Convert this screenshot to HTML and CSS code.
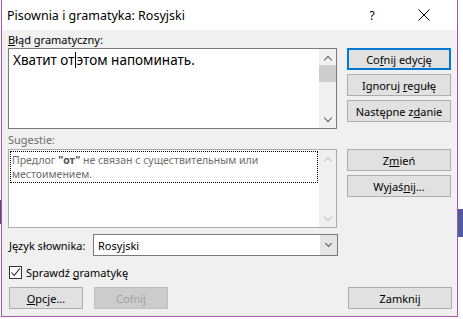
FILE: index.html
```html
<!DOCTYPE html>
<html lang="pl">

<head>
    <meta charset="UTF-8">
    <title>Pisownia i gramatyka: Rosyjski</title>
    <link rel="stylesheet" href="styles.css">
</head>

<body>
    <div class="dialog">
        <div class="titlebar">
            <span class="title">Pisownia i gramatyka: Rosyjski</span>
            <span class="help">?</span>
            <span class="close">
                <svg width="12" height="12" viewBox="0 0 12 12">
                    <path d="M0.5 0.5 L11.5 11.5 M11.5 0.5 L0.5 11.5" stroke="#000" stroke-width="1" fill="none" />
                </svg>
            </span>
        </div>

        <div class="content">
            <label class="label"><u>B</u>łąd gramatyczny:</label>
            <div class="row">
                <div class="textbox">
                    <div class="text">Хватит от<span class="caret"></span>этом напоминать.</div>
                    <div class="scrollbar">
                        <span class="arrow up"></span>
                        <span class="thumb"></span>
                        <span class="arrow down"></span>
                    </div>
                </div>
                <div class="buttons">
                    <button class="btn default">Co<u>f</u>nij edycję</button>
                    <button class="btn">Ignoruj <u>r</u>egułę</button>
                    <button class="btn">Następne z<u>d</u>anie</button>
                </div>
            </div>

            <label class="label disabled">Sugestie:</label>
            <div class="row">
                <div class="textbox suggest">
                    <div class="text">
                        <div class="focus-rect">Предлог <b>"от"</b> не связан с существительным или местоимением.</div>
                    </div>
                    <div class="scrollbar">
                        <span class="arrow up"></span>
                        <span class="arrow down"></span>
                    </div>
                </div>
                <div class="buttons">
                    <button class="btn">Z<u>m</u>ień</button>
                    <button class="btn">Wyjaś<u>n</u>ij...</button>
                </div>
            </div>

            <div class="lang-row">
                <label class="lang-label"><u>J</u>ęzyk słownika:</label>
                <div class="combo">
                    <span class="combo-value">Rosyjski</span>
                    <span class="combo-btn"><span class="arrow down"></span></span>
                </div>
            </div>

            <div class="check-row">
                <span class="checkbox">
                    <svg width="11" height="11" viewBox="0 0 11 11">
                        <path d="M1.5 5.5 L4.2 8.5 L9.8 1.5" stroke="#222" stroke-width="1.1" fill="none" />
                    </svg>
                </span>
                <span>Sprawdź <u>g</u>ramatykę</span>
            </div>

            <div class="bottom-row">
                <button class="btn small"><u>O</u>pcje...</button>
                <button class="btn small" disabled>Cofnij</button>
                <button class="btn wide">Zamknij</button>
            </div>
        </div>
    </div>
</body>

</html>
```

FILE: styles.css
```css
* {
    margin: 0;
    padding: 0;
    box-sizing: border-box;
}

body {
    width: 463px;
    height: 319px;
    overflow: hidden;
    font-family: 'Noto Sans', sans-serif;
    font-size: 11px;
    color: #000;
    background:
        linear-gradient(#55579e, #4a5ea6) no-repeat right 0 top 209px / 5px 28px,
        linear-gradient(#6a3f80, #6a3f80) no-repeat left 0 top 200px / 1px 24px,
        #fff;
}

u {
    text-decoration: underline;
    text-underline-offset: 1px;
}

.dialog {
    margin-left: 1px;
    width: 457px;
    height: 317px;
    border: 1px solid #a55aa8;
    border-top: none;
    background-color: #f0f0f0;
    display: flex;
    flex-direction: column;
}

.titlebar {
    height: 30px;
    background-color: #fff;
    display: flex;
    align-items: center;
    padding-left: 5px;
}

.title {
    font-size: 12.5px;
    flex: 1;
}

.help {
    font-size: 12px;
    width: 46px;
    text-align: center;
    margin-right: 6px;
}

.close {
    width: 46px;
    height: 30px;
    display: flex;
    align-items: center;
    justify-content: center;
    margin-right: 10px;
}

.content {
    padding: 3px 5px 0 6px;
    display: flex;
    flex-direction: column;
}

.label {
    height: 15px;
    line-height: 14px;
}

.label.disabled {
    color: #6d6d6d;
    margin-top: 4px;
    height: 16px;
}

.row {
    display: flex;
    gap: 10px;
}

.textbox {
    width: 329px;
    height: 81px;
    background-color: #fff;
    border: 1px solid #7a7a7a;
    display: flex;
}

.textbox .text {
    flex: 1;
    font-size: 13.5px;
    padding: 2px 4px;
    line-height: 18px;
}

.caret {
    display: inline-block;
    width: 1px;
    height: 16px;
    background-color: #000;
    vertical-align: -3px;
    margin-right: 1px;
}

.textbox.suggest {
    height: 79px;
    border-color: #adadad;
}

.textbox.suggest .text {
    font-size: 10.5px;
    line-height: 14px;
    color: #6d6d6d;
    padding: 1px 1px;
}

.focus-rect {
    border: 1px dotted #000;
    padding: 1px 2px 1px 1px;
}

.focus-rect b {
    color: #555;
}

.scrollbar {
    width: 17px;
    background-color: #f0f0f0;
    display: flex;
    flex-direction: column;
    align-items: center;
    justify-content: space-between;
    padding: 5px 0 4px;
}

.thumb {
    width: 17px;
    height: 17px;
    background-color: #cdcdcd;
    margin-top: 2px;
    margin-bottom: auto;
}

.arrow {
    width: 6px;
    height: 6px;
    border-left: 1.5px solid #606060;
    border-top: 1.5px solid #606060;
}

.arrow.up {
    transform: rotate(45deg);
    margin-top: 3px;
}

.arrow.down {
    transform: rotate(225deg);
    margin-bottom: 3px;
}

.suggest .arrow {
    border-color: #c2c2c2;
}

.buttons {
    display: flex;
    flex-direction: column;
    gap: 4px;
}

.btn {
    width: 104px;
    height: 22px;
    font-family: 'Noto Sans', sans-serif;
    font-size: 11px;
    color: #000;
    background-color: #e1e1e1;
    border: 1px solid #adadad;
}

.btn.default {
    border: 2px solid #0078d7;
}

.btn:disabled {
    background-color: #cccccc;
    border-color: #bfbfbf;
    color: #a0a0a0;
}

.lang-row {
    margin-top: 6px;
    display: flex;
    align-items: center;
    height: 22px;
}

.lang-label {
    width: 85px;
    padding-left: 1px;
}

.combo {
    width: 245px;
    height: 22px;
    background-color: #fff;
    border: 1px solid #7a7a7a;
    display: flex;
    align-items: center;
}

.combo-value {
    flex: 1;
    padding-left: 4px;
}

.combo-btn {
    width: 17px;
    height: 20px;
    background-color: #e5e5e5;
    display: flex;
    align-items: center;
    justify-content: center;
}

.combo-btn .arrow {
    width: 5px;
    height: 5px;
    border-width: 1px;
    border-color: #555;
    margin-bottom: 3px;
}

.check-row {
    margin-top: 8px;
    height: 16px;
    display: flex;
    align-items: center;
    gap: 4px;
    padding-left: 1px;
}

.checkbox {
    width: 13px;
    height: 13px;
    border: 1px solid #333;
    background-color: #fff;
    display: flex;
    align-items: center;
    justify-content: center;
}

.bottom-row {
    margin-top: 7px;
    display: flex;
    gap: 11px;
    padding-left: 1px;
}

.btn.small {
    width: 74px;
}

.btn.wide {
    margin-left: auto;
}
```
